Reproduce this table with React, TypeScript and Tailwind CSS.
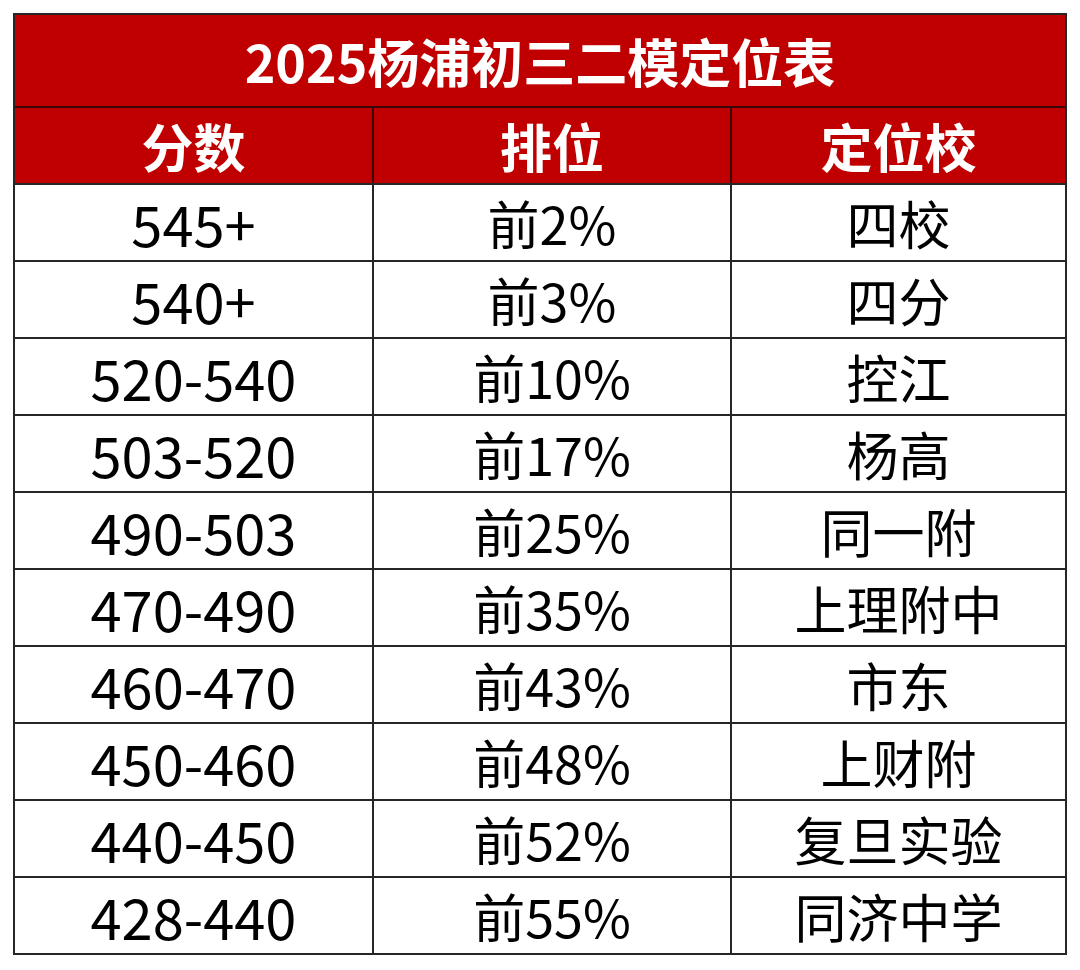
import React from "react";

const rows: [string, string, string][] = [
  ["545+", "前2%", "四校"],
  ["540+", "前3%", "四分"],
  ["520-540", "前10%", "控江"],
  ["503-520", "前17%", "杨高"],
  ["490-503", "前25%", "同一附"],
  ["470-490", "前35%", "上理附中"],
  ["460-470", "前43%", "市东"],
  ["450-460", "前48%", "上财附"],
  ["440-450", "前52%", "复旦实验"],
  ["428-440", "前55%", "同济中学"],
];

const font = { fontFamily: '"Noto Sans CJK SC", "Noto Sans", sans-serif' };

export default function App() {
  return (
    <div className="w-[1080px] h-[970px] bg-white pt-[13px] pl-[13px]" style={font}>
      <div className="w-[1054px] border-2 border-[#262626] flex flex-col">
        <div className="h-[93px] bg-[#c00000] border-b-2 border-[#3a0808] flex items-center justify-center text-white font-bold text-[52px] leading-none">
          2025杨浦初三二模定位表
        </div>
        <div className="h-[77px] bg-[#c00000] border-b-2 border-[#262626] grid grid-cols-[359px_358px_333px] text-white font-bold text-[52px] leading-none">
          <div className="border-r-2 border-[#3a0808] flex items-center justify-center">分数</div>
          <div className="border-r-2 border-[#3a0808] flex items-center justify-center">排位</div>
          <div className="flex items-center justify-center">定位校</div>
        </div>
        {rows.map((r, i) => (
          <div
            key={i}
            className={`grid grid-cols-[359px_358px_333px] text-black text-[52px] leading-none ${
              i === rows.length - 1 ? "h-[75px]" : "h-[77px] border-b-2 border-[#262626]"
            }`}
          >
            <div className="border-r-2 border-[#262626] flex items-center justify-center text-[56px]">{r[0]}</div>
            <div className="border-r-2 border-[#262626] flex items-center justify-center">{r[1]}</div>
            <div className="flex items-center justify-center">{r[2]}</div>
          </div>
        ))}
      </div>
    </div>
  );
}
